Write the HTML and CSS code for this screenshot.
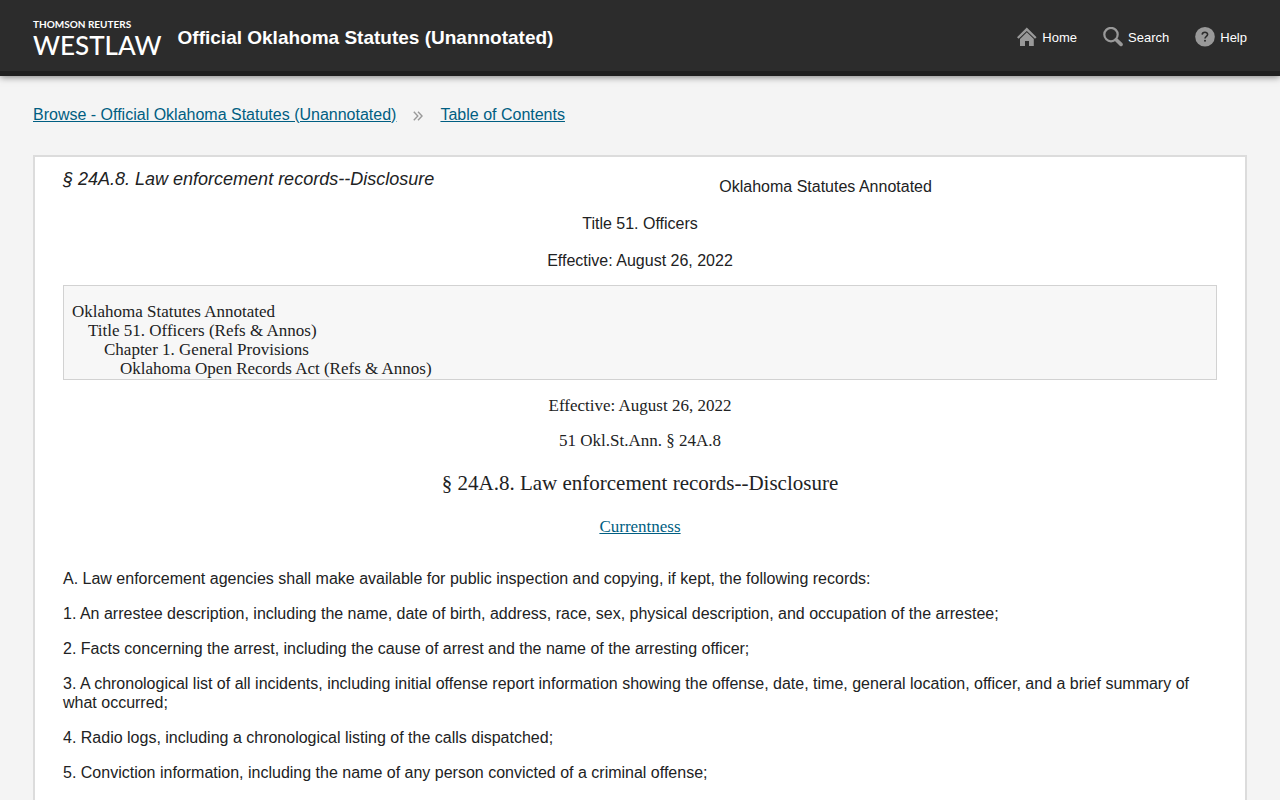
FILE: index.html
```html
<!DOCTYPE html>
<html lang="en">
<head>
<meta charset="utf-8">
<title>§ 24A.8. Law enforcement records--Disclosure</title>
<link rel="stylesheet" href="styles.css">
</head>

<body>
<header class="header">
  <a class="logo" href="#">
    <span class="logo_top">THOMSON REUTERS</span>
    <span class="logo_name">WESTLAW</span>
  </a>
  <div class="site_title">Official Oklahoma Statutes (Unannotated)</div>
  <nav class="nav">
    <a href="#">
      <svg width="20" height="20" viewBox="0 0 20 20">
        <path fill="#999" d="M9.8 0.6 L19.6 10.2 L18 11.8 L9.8 4 L1.6 11.8 L0 10.2 Z"/>
        <path fill="#999" d="M9.8 5.2 L16.8 12 V19 H12 V14 H8 V19 H3 V12 Z"/>
      </svg>
      Home
    </a>
    <a href="#">
      <svg width="20" height="20" viewBox="0 0 20 20">
        <circle cx="8" cy="7.6" r="6.7" fill="none" stroke="#999" stroke-width="2.2"/>
        <path d="M13.2 12.8 L18 17.4" stroke="#999" stroke-width="3.6" stroke-linecap="round"/>
      </svg>
      Search
    </a>
    <a href="#">
      <svg width="20" height="20" viewBox="0 0 20 20">
        <circle cx="10" cy="9.8" r="9.8" fill="#999"/>
        <path d="M7.2 7.6 C7.3 4.5 12.7 4.6 12.6 7.5 C12.5 9.3 10 9.3 10 11.6" fill="none" stroke="#2c2c2c" stroke-width="1.6"/>
        <circle cx="10" cy="13.8" r="1" fill="#2c2c2c"/>
      </svg>
      Help
    </a>
  </nav>
</header>

<div class="breadcrumb">
  <a href="#">Browse - Official Oklahoma Statutes (Unannotated)</a>
  <svg class="arrow" width="10" height="10" viewBox="0 0 10 10">
    <path d="M0.8 0.8 L4.8 5 L0.8 9.2 M5 0.8 L9 5 L5 9.2" fill="none" stroke="#999" stroke-width="1.4"/>
  </svg>
  <a href="#">Table of Contents</a>
</div>

<main class="document">
  <h1 class="doc_title">§ 24A.8. Law enforcement records--Disclosure</h1>
  <div class="meta">
    <p>Oklahoma Statutes Annotated</p>
    <p>Title 51. Officers</p>
    <p>Effective: August 26, 2022</p>
  </div>

  <div class="prelim">
    <div>Oklahoma Statutes Annotated</div>
    <div class="level1">Title 51. Officers (Refs &amp; Annos)</div>
    <div class="level2">Chapter 1. General Provisions</div>
    <div class="level3">Oklahoma Open Records Act (Refs &amp; Annos)</div>
  </div>

  <div class="cite">
    <p>Effective: August 26, 2022</p>
    <p>51 Okl.St.Ann. § 24A.8</p>
    <h2>§ 24A.8. Law enforcement records--Disclosure</h2>
    <p><a href="#">Currentness</a></p>
  </div>

  <div class="body_text">
    <p>A. Law enforcement agencies shall make available for public inspection and copying, if kept, the following records:</p>
    <p>1. An arrestee description, including the name, date of birth, address, race, sex, physical description, and occupation of the arrestee;</p>
    <p>2. Facts concerning the arrest, including the cause of arrest and the name of the arresting officer;</p>
    <p>3. A chronological list of all incidents, including initial offense report information showing the offense, date, time, general location, officer, and a brief summary of what occurred;</p>
    <p>4. Radio logs, including a chronological listing of the calls dispatched;</p>
    <p>5. Conviction information, including the name of any person convicted of a criminal offense;</p>
  </div>
</main>
</body>
</html>
```
FILE: styles.css
```css
* {
	margin: 0;
	padding: 0;
	box-sizing: border-box;
}
body {
	background: #f4f4f4;
	color: #212223;
	font-family: Arial, "Liberation Sans", sans-serif;
	font-size: 16px;
	line-height: 19px;
}
a {
	color: #005e82;
}
.header {
	display: flex;
	align-items: center;
	height: 76px;
	padding: 0 33px;
	background: #2c2c2c;
	border-bottom: 5px solid #1f1f1f;
	box-shadow: 0 1px 7px rgba(0, 0, 0, 0.5);
	color: #fff;
}
.logo {
	display: flex;
	flex-direction: column;
	padding-top: 6px;
	color: #fff;
	font-family: Lato, sans-serif;
	text-decoration: none;
}
.logo_top {
	font-size: 10px;
	font-weight: bold;
	line-height: 12px;
}
.logo_name {
	font-size: 26px;
	font-weight: 500;
	line-height: 30px;
}
.site_title {
	margin-left: 16px;
	padding-top: 4px;
	font-size: 19px;
	font-weight: bold;
}
.nav {
	display: flex;
	gap: 26px;
	margin-left: auto;
	padding-top: 3px;
}
.nav a {
	display: flex;
	align-items: center;
	gap: 5px;
	color: #fff;
	font-size: 13px;
	text-decoration: none;
}
.breadcrumb {
	display: flex;
	align-items: center;
	padding: 29px 33px 31px;
}
.arrow {
	margin: 2px 17px 0;
}
.document {
	margin: 0 33px;
	padding: 13px 28px 16px;
	background: #fff;
	border: 2px solid #dcdcdc;
}
.doc_title {
	float: left;
	font-size: 18px;
	font-style: italic;
	font-weight: normal;
}
.meta {
	padding-top: 7px;
	text-align: center;
}
.meta p {
	margin-bottom: 18px;
}
.meta p:last-child {
	margin-bottom: 15px;
}
.prelim {
	padding: 16px 8px 1px;
	background: #f7f7f7;
	border: 1px solid #d2d2d2;
}
.prelim, .cite {
	font-family: Georgia, "Liberation Serif", serif;
	font-size: 17px;
}
.level1 {
	margin-left: 16px;
}
.level2 {
	margin-left: 32px;
}
.level3 {
	margin-left: 48px;
}
.cite {
	padding-top: 16px;
	text-align: center;
}
.cite p {
	margin-bottom: 16px;
}
.cite h2 {
	margin: 24px 0;
	font-size: 21px;
	font-weight: normal;
}
.body_text {
	padding-top: 17px;
}
.body_text p {
	margin-bottom: 16px;
}
```
